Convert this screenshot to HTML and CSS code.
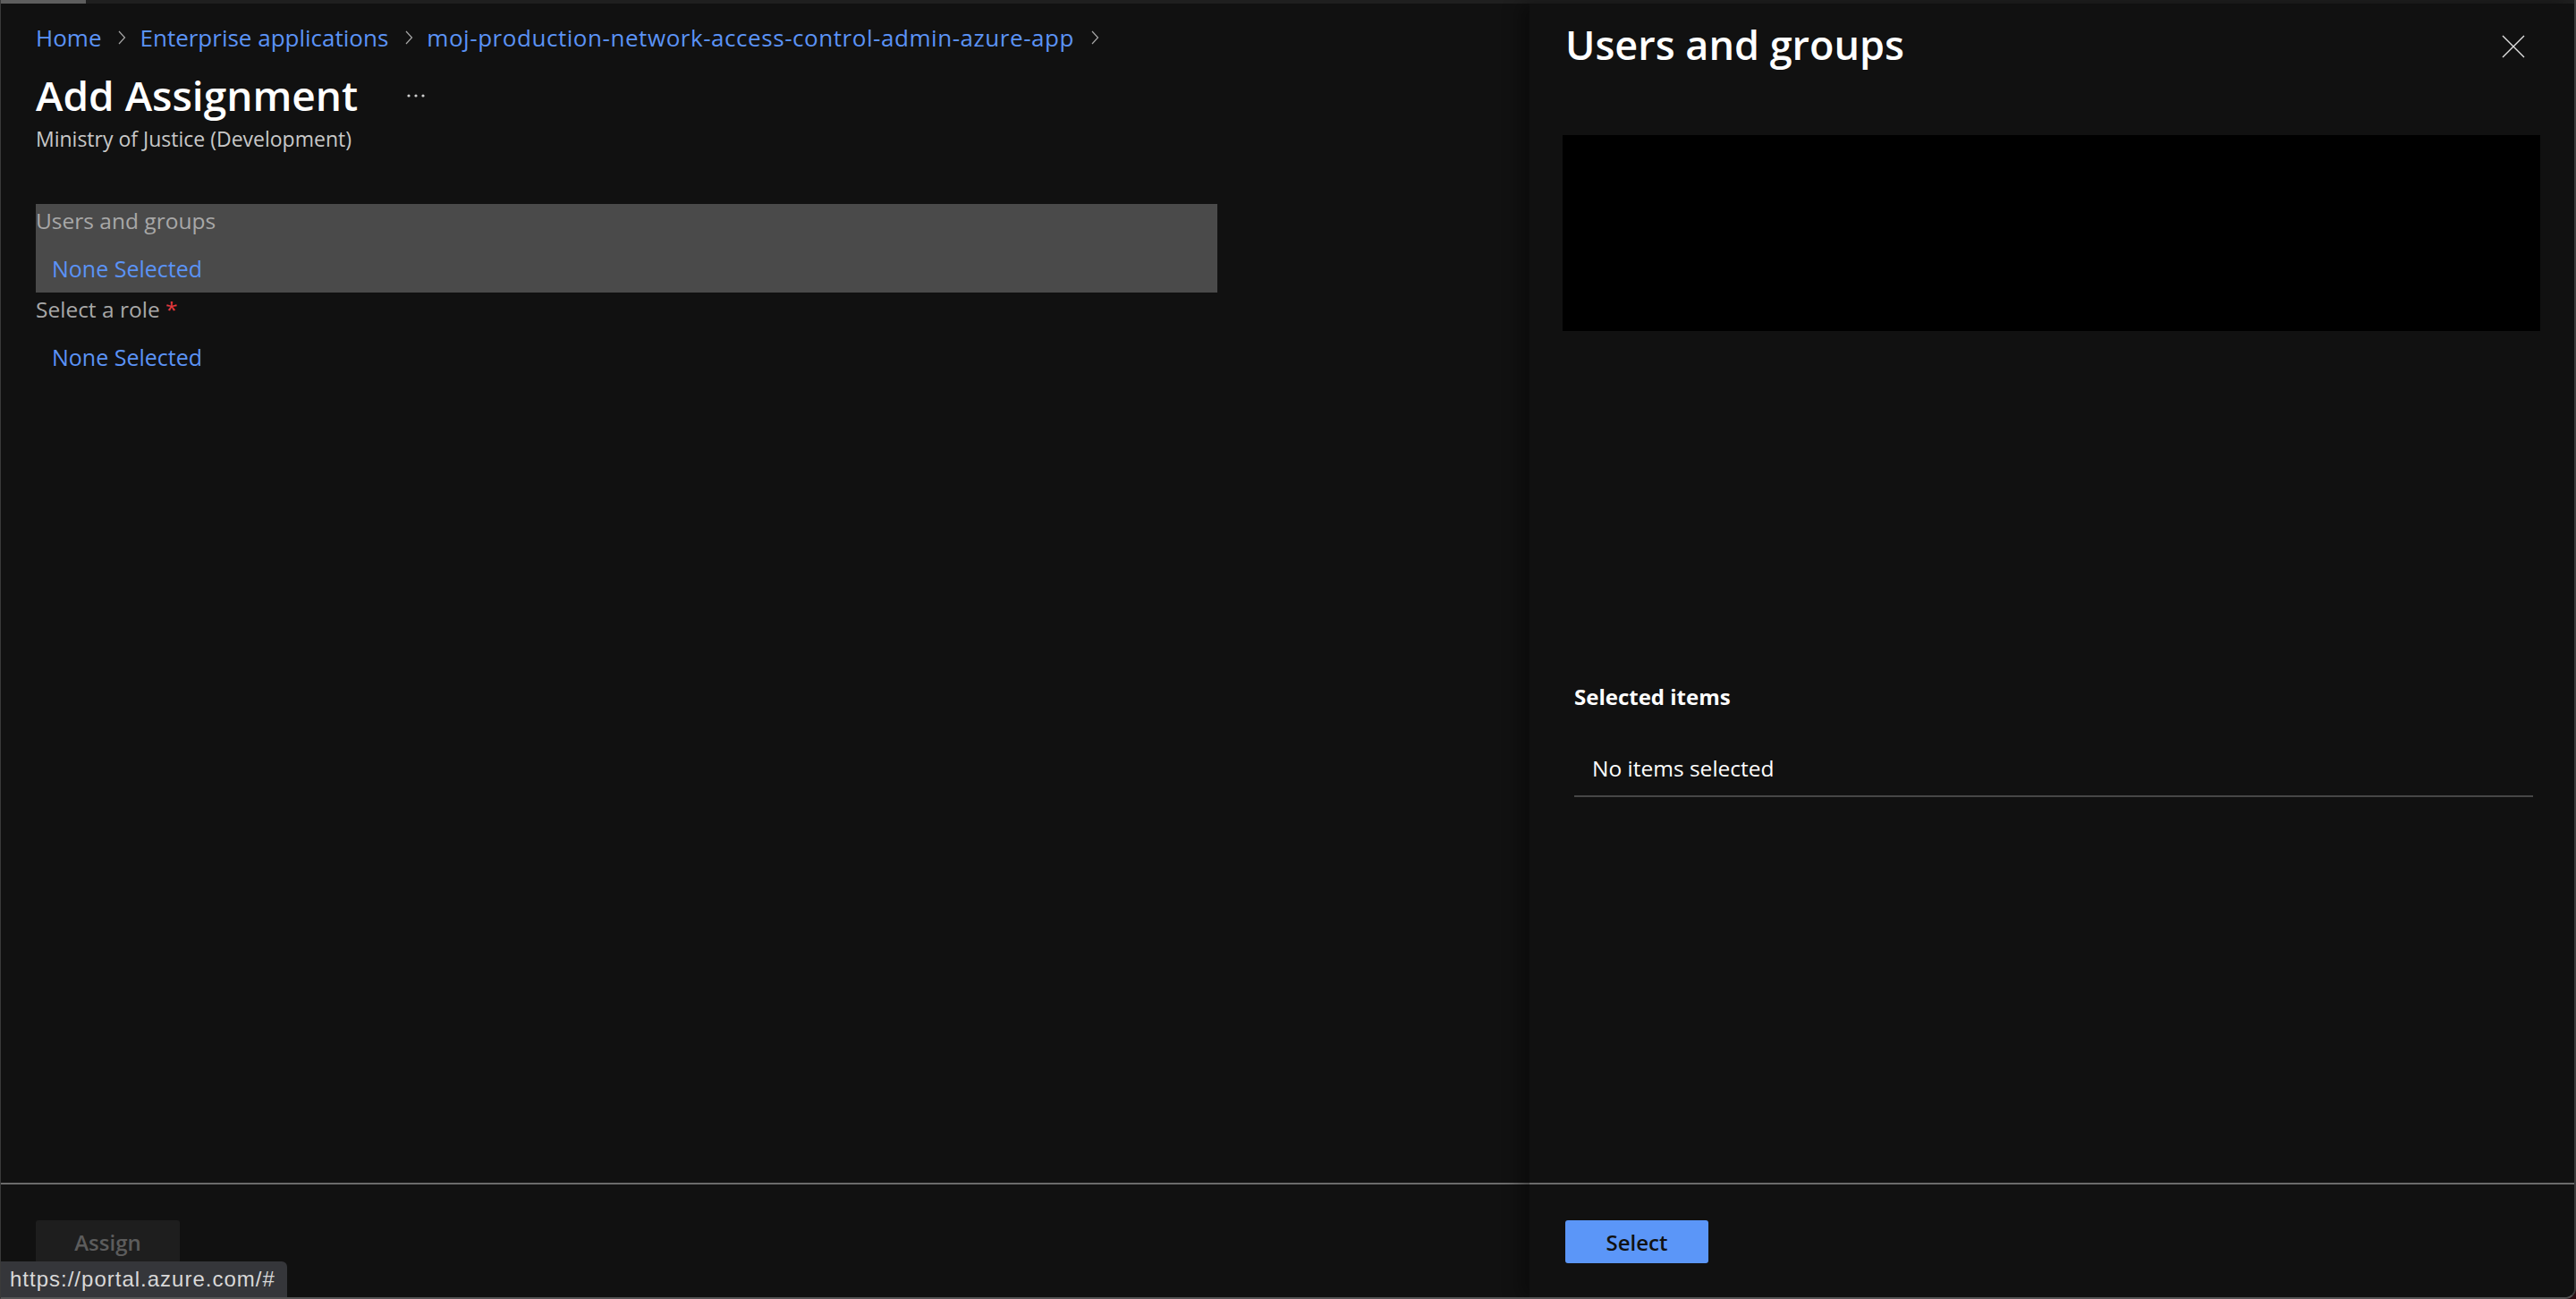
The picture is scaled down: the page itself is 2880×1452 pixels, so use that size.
FILE: index.html
```html
<!DOCTYPE html>
<html lang="en">
<head>
<meta charset="utf-8">
<title>Add Assignment</title>
<link rel="stylesheet" href="styles.css">
</head>
<body>
<div class="window">
  <div class="topbar"><div class="topbar-seg"></div></div>
  <div class="main">
    <section class="blade">
      <div class="blade-body">
        <nav class="crumbs">
          <a class="crumb" href="#">Home</a>
          <svg class="chev" width="10" height="16" viewBox="0 0 10 16"><polyline points="2,1 8.5,8 2,15" fill="none" stroke="#a8a8a8" stroke-width="1.2"/></svg>
          <a class="crumb" href="#">Enterprise applications</a>
          <svg class="chev" width="10" height="16" viewBox="0 0 10 16"><polyline points="2,1 8.5,8 2,15" fill="none" stroke="#a8a8a8" stroke-width="1.2"/></svg>
          <a class="crumb crumb-long" href="#">moj-production-network-access-control-admin-azure-app</a>
          <svg class="chev" width="10" height="16" viewBox="0 0 10 16"><polyline points="2,1 8.5,8 2,15" fill="none" stroke="#a8a8a8" stroke-width="1.2"/></svg>
        </nav>
        <div class="title-row">
          <h1 class="title">Add Assignment</h1>
          <svg class="more" width="22" height="6" viewBox="0 0 22 6"><circle cx="3" cy="3" r="1.6" fill="#cfcfcf"/><circle cx="11" cy="3" r="1.6" fill="#cfcfcf"/><circle cx="19" cy="3" r="1.6" fill="#cfcfcf"/></svg>
        </div>
        <div class="subtitle">Ministry of Justice (Development)</div>
        <div class="field field-active">
          <div class="field-label">Users and groups</div>
          <a class="field-value" href="#">None Selected</a>
        </div>
        <div class="field">
          <div class="field-label">Select a role <span class="req">*</span></div>
          <a class="field-value" href="#">None Selected</a>
        </div>
      </div>
      <footer class="blade-footer">
        <button class="btn btn-disabled" type="button">Assign</button>
      </footer>
    </section>
    <section class="panel">
      <div class="panel-body">
        <div class="panel-head">
          <h2 class="panel-title">Users and groups</h2>
          <svg class="close" width="26" height="26" viewBox="0 0 26 26"><path d="M1 1 L25 25 M25 1 L1 25" stroke="#e0e0e0" stroke-width="1.4" fill="none"/></svg>
        </div>
        <div class="redacted"></div>
        <div class="selected">
          <div class="selected-title">Selected items</div>
          <div class="selected-empty">No items selected</div>
        </div>
      </div>
      <footer class="panel-footer">
        <button class="btn btn-primary" type="button">Select</button>
      </footer>
    </section>
  </div>
  <div class="status">https://portal.azure.com/#</div>
</div>
</body>
</html>
```
FILE: styles.css
```css
* { box-sizing: border-box; }
html, body { margin: 0; padding: 0; }
body {
  background: #2a0c13;
  font-family: "Segoe UI", "Open Sans", "Noto Sans", sans-serif;
  color: #ffffff;
  width: 2880px;
  height: 1452px;
  overflow: hidden;
}
.window {
  position: relative;
  width: 2880px;
  height: 1452px;
  background: #111111;
  border-left: 1px solid #3a3a3a;
  border-right: 2px solid #3c3c3c;
  border-bottom: 2px solid #555555;
  border-bottom-right-radius: 12px;
  overflow: hidden;
  display: flex;
  flex-direction: column;
}
.topbar {
  height: 4px;
  background: #1f1f1f;
  flex: none;
}
.topbar-seg {
  width: 95px;
  height: 4px;
  background: #5e5e5e;
}
.main {
  flex: 1;
  display: flex;
  min-height: 0;
}
.blade {
  width: 1709px;
  flex: none;
  display: flex;
  flex-direction: column;
}
.blade-body {
  flex: 1;
  padding: 18px 0 0 39px;
}
.crumbs {
  display: flex;
  align-items: center;
  height: 40px;
  font-size: 26px;
  line-height: 40px;
}
.crumb {
  color: #5b93f6;
  text-decoration: none;
}
.crumb-long {
  letter-spacing: 0.55px;
}
.chev {
  margin: 0 15px 0 18px;
  flex: none;
}
.title-row {
  display: flex;
  align-items: center;
  margin-top: 16px;
  height: 56px;
}
.title {
  margin: 0;
  font-size: 46px;
  line-height: 56px;
  font-weight: 600;
  color: #ffffff;
}
.more {
  margin-left: 54px;
  margin-top: 2px;
}
.subtitle {
  margin-top: 6px;
  font-size: 23px;
  line-height: 30px;
  color: #c8c8c8;
}
.field {
  width: 1321px;
  padding: 3px 0 11px 0;
  display: flex;
  flex-direction: column;
  align-items: flex-start;
}
.field-active {
  margin-top: 58px;
  background: #4a4a4a;
}
.field-label {
  font-size: 24.5px;
  line-height: 32px;
  color: #a8a8a8;
}
.req {
  color: #e5393f;
}
.field-value {
  margin-top: 21px;
  padding-left: 18px;
  font-size: 25px;
  line-height: 32px;
  color: #5b93f6;
  text-decoration: none;
}
.blade-footer,
.panel-footer {
  flex: none;
  height: 128px;
  border-top: 2px solid #6b6b6b;
  padding-top: 40px;
}
.blade-footer {
  padding-left: 39px;
}
.btn {
  height: 48px;
  border: none;
  border-radius: 3px;
  font-family: inherit;
  font-size: 24px;
  font-weight: 600;
  padding: 0;
  display: flex;
  align-items: center;
  justify-content: center;
}
.btn-disabled {
  width: 161px;
  background: #1e1e1e;
  color: #5c5c5c;
}
.btn-primary {
  width: 160px;
  background: #5b96f8;
  color: #111111;
}
.panel {
  flex: 1;
  display: flex;
  flex-direction: column;
  background: #111111;
  box-shadow: -10px 0 18px rgba(0, 0, 0, 0.35);
  position: relative;
}
.panel-body {
  flex: 1;
  padding: 16px 38px 0 37px;
}
.panel-head {
  display: flex;
  align-items: center;
  justify-content: space-between;
  height: 60px;
}
.panel-title {
  margin: 0 0 0 3px;
  font-size: 45px;
  line-height: 60px;
  font-weight: 600;
  color: #ffffff;
}
.close {
  margin-right: 17px;
  margin-top: 3px;
}
.redacted {
  margin-top: 71px;
  height: 219px;
  background: #000000;
}
.selected {
  margin-top: 393px;
  padding: 0 8px 0 13px;
}
.selected-title {
  font-size: 24px;
  line-height: 32px;
  font-weight: 700;
  color: #ffffff;
}
.selected-empty {
  margin-top: 48px;
  padding: 0 0 14px 20px;
  font-size: 24.5px;
  line-height: 32px;
  color: #ffffff;
  border-bottom: 2px solid #474747;
}
.panel-footer {
  padding-left: 40px;
}
.status {
  position: absolute;
  left: 0;
  bottom: 0;
  width: 320px;
  height: 40px;
  background: #35363a;
  border-top-right-radius: 6px;
  color: #d8d8d8;
  font-family: "Liberation Sans", Arial, sans-serif;
  font-size: 24px;
  line-height: 40px;
  letter-spacing: 1px;
  padding-left: 10px;
  white-space: nowrap;
}
```
